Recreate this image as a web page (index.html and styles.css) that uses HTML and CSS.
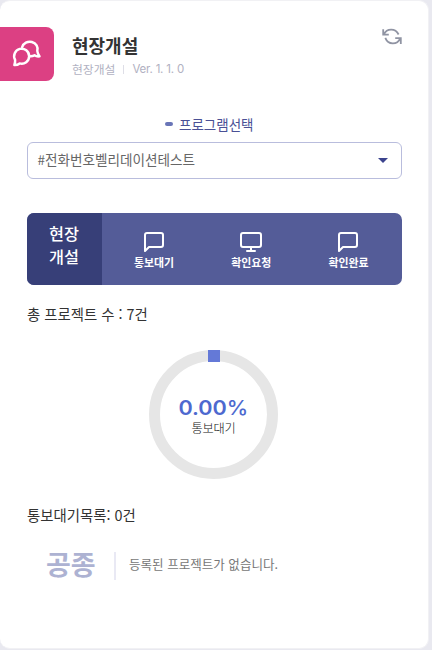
FILE: index.html
```html
<!DOCTYPE html>
<html lang="ko">
<head>
<meta charset="utf-8">
<title>현장개설</title>
<link rel="stylesheet" href="styles.css">
</head>
<body>
<main class="card">
  <header class="header">
    <div class="brand">
      <svg width="30" height="28" viewBox="0 0 30 28" fill="none" stroke="currentColor" stroke-width="2.5" stroke-linejoin="round" stroke-linecap="round">
        <path d="M10.200 7A7.800 7.300 0 1 1 25.300 11Q25.600 14 27.500 16.300Q24.800 16.800 22.500 15.300Q20.500 16.300 18.500 16.200"/>
        <path d="M2.400 25Q3.300 22.500 3.100 19.800A7.500 7.500 0 1 1 7.700 23.400Q5.300 25.200 2.400 25Z" fill="#dc4083"/>
      </svg>
    </div>
    <div class="heading">
      <h1 class="title">현장개설</h1>
      <p class="meta"><span class="meta-name">현장개설</span><i class="meta-line"></i><span class="version">Ver. 1. 1. 0</span></p>
    </div>
    <svg class="refresh" width="20" height="18" viewBox="0 0 20 18" fill="none" stroke="currentColor" stroke-width="1.8">
      <path d="M1.200 1.200V6.700H6.800M1.800 6.400C4.800 .4 13.200-.2 16.600 6.500M18.800 16V10.200H13.200M18.200 10.400C15.200 17.200 6.200 17.200 3.300 9.900"/>
    </svg>
  </header>
  <div class="select-label"><i class="dash"></i>프로그램선택</div>
  <div class="select"><span>#전화번호벨리데이션테스트</span><i class="caret"></i></div>
  <nav class="tabs">
    <div class="tabs-title">현장<br>개설</div>
    <div class="tabs-list">
      <div class="tab">
        <svg width="24" height="24" viewBox="0 0 24 24"><path d="M3 21V5a2 2 0 0 1 2-2h14a2 2 0 0 1 2 2v10a2 2 0 0 1-2 2H7z"/></svg>
        <span>통보대기</span>
      </div>
      <div class="tab">
        <svg width="24" height="24" viewBox="0 0 24 24"><rect x="2" y="3" width="20" height="14" rx="2"/><path d="M8 21h8M12 17v4"/></svg>
        <span>확인요청</span>
      </div>
      <div class="tab">
        <svg width="24" height="24" viewBox="0 0 24 24"><path d="M3 21V5a2 2 0 0 1 2-2h14a2 2 0 0 1 2 2v10a2 2 0 0 1-2 2H7z"/></svg>
        <span>확인완료</span>
      </div>
    </div>
  </nav>
  <p class="total">총 프로젝트 수 : 7건</p>
  <div class="ring">
    <i class="ring-mark"></i>
    <strong class="percent">0.00<span>%</span></strong>
    <span class="ring-label">통보대기</span>
  </div>
  <p class="list-title">통보대기목록: 0건</p>
  <div class="empty"><strong class="empty-kind">공종</strong><span class="empty-text">등록된 프로젝트가 없습니다.</span></div>
</main>
</body>
</html>
```
FILE: styles.css
```css
* { box-sizing: border-box; }
body {
  margin: 0;
  height: 650px;
  overflow: hidden;
  background: #e9e9f0;
  font-family: "Noto Sans CJK KR", sans-serif;
  color: #333;
}
h1, p { margin: 0; font-weight: 400; }
.card {
  width: 429px;
  height: 649px;
  padding: 27px 26px 0 0;
  background: #fff;
  border: 1px solid #f1f1f4;
  border-width: 1px 1px 1px 0;
  border-radius: 10px;
}
.header { display: flex; height: 54px; margin-top: -1px; }
.brand {
  display: flex;
  align-items: center;
  width: 54px;
  height: 54px;
  padding-left: 12px;
  border-radius: 0 8px 8px 0;
  background: #dc4083;
  color: #fff;
}
.brand svg { overflow: visible; flex: none; }
.heading { flex: 1; padding: 6px 0 0 18px; }
.title { font-size: 18px; line-height: 24px; font-weight: 700; }
.meta { display: flex; align-items: center; height: 24px; font-size: 11.8px; line-height: 24px; color: #b1b1c2; }
.meta-line { width: 1px; height: 9px; margin: 0 8px; background: #dedee7; }
.version { font-family: Inter, sans-serif; font-size: 11.5px; letter-spacing: -0.2px; }
.refresh { margin-top: 1px; color: #9094a3; }
.select-label {
  display: flex;
  align-items: center;
  height: 20px;
  margin: 33px 0 8px 165px;
  font-size: 13.5px;
  line-height: 20px;
  color: #4a5095;
}
.dash { width: 8px; height: 4px; margin-right: 6px; border-radius: 2px; background: #6975b7; }
.select {
  display: flex;
  align-items: center;
  justify-content: space-between;
  width: 375px;
  height: 37px;
  margin-left: 26.5px;
  padding: 0 13px 3px 10px;
  border: 1px solid #b9bddd;
  border-radius: 6px;
  font-size: 13.6px;
  color: #666;
}
.caret { margin-top: 3px; border: 5px solid transparent; border-top-color: #3b438d; border-bottom: 0; }
.tabs { display: flex; width: 375px; height: 72px; margin: 33.5px 0 0 26.500px; border-radius: 7px; overflow: hidden; background: #545c98; color: #fff; }
.tabs-title { width: 75px; padding: 9.5px 0 0 0; background: #373f78; font-size: 16.3px; font-weight: 500; line-height: 23px; text-align: center; }
.tabs-list { display: flex; flex: 1; padding: 17.5px 4.5px 0 4px; }
.tab { display: flex; flex: 1; flex-direction: column; align-items: center; font-size: 10.9px; font-weight: 700; line-height: 16px; }
.tab svg { fill: none; stroke: currentColor; stroke-width: 2; stroke-linecap: round; stroke-linejoin: round; }
.total { margin: 18.500px 0 0 27px; font-size: 14.4px; line-height: 22px; }
.ring {
  position: relative;
  display: flex;
  flex-direction: column;
  align-items: center;
  width: 129px;
  height: 129px;
  margin: 25px 0 0 149px;
  padding-top: 35px;
  border: 11px solid #e6e6e6;
  border-radius: 50%;
}
.ring-mark { position: absolute; top: -11px; left: 48px; width: 12px; height: 12px; background: #6479d7; }
.percent { font: 600 20px/24px Inter, sans-serif; color: #4d69cf; transform: scaleX(1.08); }
.percent span { font-weight: 500; }
.ring-label { margin-top: -1px; font-size: 12.2px; line-height: 18px; font-weight: 300; letter-spacing: -0.2px; color: #111; }
.list-title { margin: 25px 0 0 27px; font-size: 14.4px; line-height: 22px; }
.empty { display: flex; align-items: center; height: 28px; margin: 26px 0 0 46px; }
.empty-kind { width: 68px; margin-top: -4px; font-size: 27px; line-height: 28px; color: #adb2d2; }
.empty-text { height: 28px; padding-left: 13px; border-left: 2px solid #e9e9f4; font-size: 12.55px; line-height: 23px; color: #777; }
```
